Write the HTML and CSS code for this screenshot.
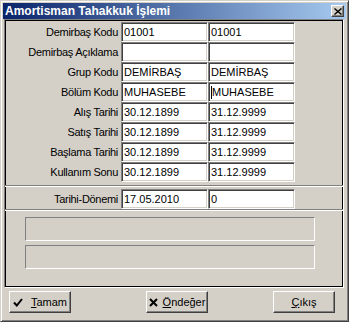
FILE: index.html
```html
<!DOCTYPE html>
<html lang="tr">
<head>
    <meta charset="UTF-8">
    <title>Amortisman Tahakkuk İşlemi</title>
    <link rel="stylesheet" href="styles.css">
</head>
<body>

<div class="window">
    <div class="titlebar">
        <span class="title">Amortisman Tahakkuk İşlemi</span>
        <button class="close-btn">
            <svg width="8" height="7" viewBox="0 0 8 7"><path d="M0.5 0.5 L7.5 6.5 M7.5 0.5 L0.5 6.5" stroke="#000" stroke-width="1.4" fill="none"/></svg>
        </button>
    </div>

    <div class="panel">
        <div class="form-grid">
            <label>Demirbaş Kodu</label>
            <div class="field">01001</div>
            <div class="field">01001</div>

            <label>Demirbaş Açıklama</label>
            <div class="field"></div>
            <div class="field"></div>

            <label>Grup Kodu</label>
            <div class="field">DEMİRBAŞ</div>
            <div class="field">DEMİRBAŞ</div>

            <label>Bölüm Kodu</label>
            <div class="field">MUHASEBE</div>
            <div class="field"><span class="caret"></span>MUHASEBE</div>

            <label>Alış Tarihi</label>
            <div class="field">30.12.1899</div>
            <div class="field">31.12.9999</div>

            <label>Satış Tarihi</label>
            <div class="field">30.12.1899</div>
            <div class="field">31.12.9999</div>

            <label>Başlama Tarihi</label>
            <div class="field">30.12.1899</div>
            <div class="field">31.12.9999</div>

            <label>Kullanım Sonu</label>
            <div class="field">30.12.1899</div>
            <div class="field">31.12.9999</div>
        </div>

        <div class="separator"></div>

        <div class="form-grid period">
            <label>Tarihi-Dönemi</label>
            <div class="field">17.05.2010</div>
            <div class="field">0</div>
        </div>

        <div class="separator"></div>

        <div class="status-box"></div>
        <div class="status-box"></div>
    </div>

    <div class="button-row">
        <button class="btn btn-ok">
            <svg width="10" height="9" viewBox="0 0 10 9"><path d="M1 4.5 L3.8 7.5 L9 1" stroke="#000" stroke-width="2" fill="none"/></svg>
            <span><u>T</u>amam</span>
        </button>
        <button class="btn btn-default">
            <svg width="9" height="9" viewBox="0 0 9 9"><path d="M1 1 L8 8 M8 1 L1 8" stroke="#000" stroke-width="2" fill="none"/></svg>
            <span><u>Ö</u>ndeğer</span>
        </button>
        <button class="btn btn-exit">
            <span><u>Ç</u>ıkış</span>
        </button>
    </div>
</div>

</body>
</html>
```

FILE: styles.css
```css
body {
    margin: 0;
    background-color: #d4d0c8;
    font-family: "Liberation Sans", Arial, sans-serif;
    font-size: 11px;
    color: #000;
}

.window {
    width: 349px;
    height: 322px;
    box-sizing: border-box;
    padding: 2px;
    background-color: #d4d0c8;
    border: 1px solid;
    border-color: #d4d0c8 #404040 #404040 #d4d0c8;
    box-shadow: inset 1px 1px #fff, inset -1px -1px #808080;
}

/* caption */
.titlebar {
    height: 16px;
    display: flex;
    align-items: center;
    justify-content: space-between;
    padding: 0 2px;
    background: linear-gradient(to right, #0a246a, #a6caf0);
}

.title {
    color: #fff;
    font-weight: bold;
    font-size: 12px;
    line-height: 16px;
}

.close-btn {
    width: 13px;
    height: 12px;
    padding: 0;
    display: flex;
    align-items: center;
    justify-content: center;
    background-color: #d4d0c8;
    border: 1px solid;
    border-color: #fff #404040 #404040 #fff;
    box-shadow: inset -1px -1px #808080;
}

/* main bevel */
.panel {
    width: 340px;
    height: 269px;
    margin-left: 1px;
    box-sizing: border-box;
    padding: 2px;
    border: 1px solid;
    border-color: #808080 #fff #fff #808080;
    box-shadow: inset 0 0 0 1px #000;
}

.form-grid {
    display: grid;
    grid-template-columns: 114px 87px 87px;
    grid-auto-rows: 20px;
}

.form-grid label {
    text-align: right;
    padding-right: 3px;
    line-height: 20px;
    letter-spacing: -0.3px;
    white-space: nowrap;
}

.form-grid.period {
    margin-top: 2px;
}

.field {
    box-sizing: border-box;
    height: 20px;
    padding-left: 2px;
    display: flex;
    align-items: center;
    background-color: #fff;
    border: 1px solid;
    border-color: #808080 #fff #fff #808080;
    box-shadow: inset 1px 1px #404040, inset -1px -1px #d4d0c8;
    white-space: nowrap;
    overflow: hidden;
}

.caret {
    display: inline-block;
    width: 1px;
    height: 13px;
    background-color: #000;
}

.separator {
    margin: 3px -2px 0;
    border-top: 1px solid #808080;
    border-bottom: 1px solid #fff;
}

.period + .separator {
    margin-top: 0;
}

.status-box {
    width: 290px;
    height: 24px;
    box-sizing: border-box;
    margin-left: 18px;
    border: 1px solid;
    border-color: #808080 #fff #fff #808080;
}

.separator + .status-box {
    margin-top: 6px;
}

.status-box + .status-box {
    margin-top: 4px;
}

/* bottom buttons */
.button-row {
    display: flex;
    margin-top: 3px;
}

.btn {
    width: 62px;
    height: 22px;
    padding: 0;
    display: flex;
    align-items: center;
    justify-content: center;
    background-color: #d4d0c8;
    border: 1px solid;
    border-color: #fff #404040 #404040 #fff;
    box-shadow: inset -1px -1px #808080;
    font-family: "Liberation Sans", Arial, sans-serif;
    font-size: 11px;
    color: #000;
}

.btn-ok {
    margin-left: 6px;
    gap: 8px;
}

.btn-default {
    margin-left: 75px;
    gap: 5px;
}

.btn-exit {
    margin-left: 65px;
}
```
